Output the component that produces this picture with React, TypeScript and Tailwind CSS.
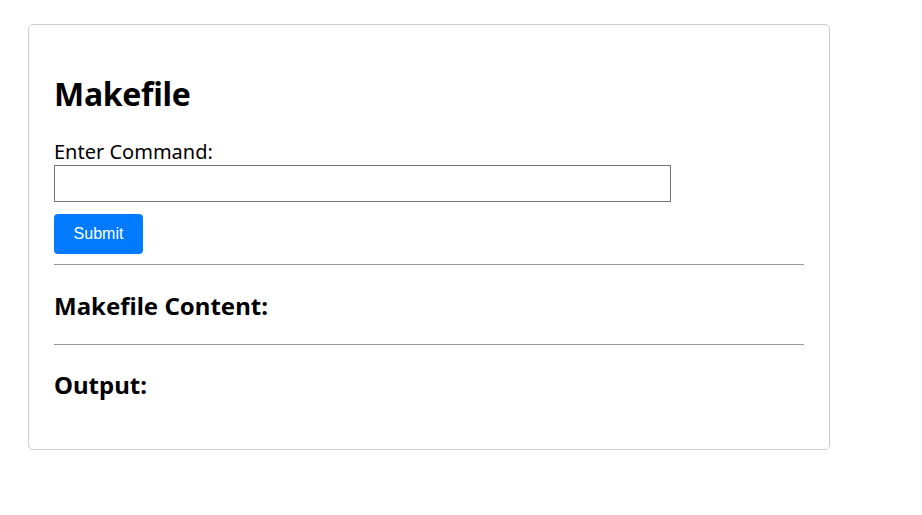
export default function App() {
  return (
    <div className="min-h-screen bg-white pl-[28px] pt-[24px] font-['Noto_Sans',sans-serif] text-black">
      {/* Card */}
      <div className="w-[802px] rounded-[5px] border border-[#cccccc] p-[25px]">
        <h1 className="mt-[23px] text-[32px] font-bold leading-[42px] tracking-[-0.3px]">Makefile</h1>

        <label className="mt-[23px] block text-[20px] leading-[27px]">Enter Command:</label>
        <input
          type="text"
          className="block h-[37px] w-[617px] border border-[#767676] px-2 outline-none"
        />

        <button className="mt-[12px] h-[40px] w-[89px] rounded-[4px] bg-[#007bff] font-['Liberation_Sans',sans-serif] text-[16px] text-white">
          Submit
        </button>

        <hr className="mt-[10px] border-t border-[#9a9a9a]" />

        <h2 className="mt-[25px] mb-[22px] text-[24px] font-bold leading-[32px]">Makefile Content:</h2>

        <hr className="border-t border-[#9a9a9a]" />

        <h2 className="mt-[24px] mb-[23px] text-[24px] font-bold leading-[32px]">Output:</h2>
      </div>
    </div>
  );
}
